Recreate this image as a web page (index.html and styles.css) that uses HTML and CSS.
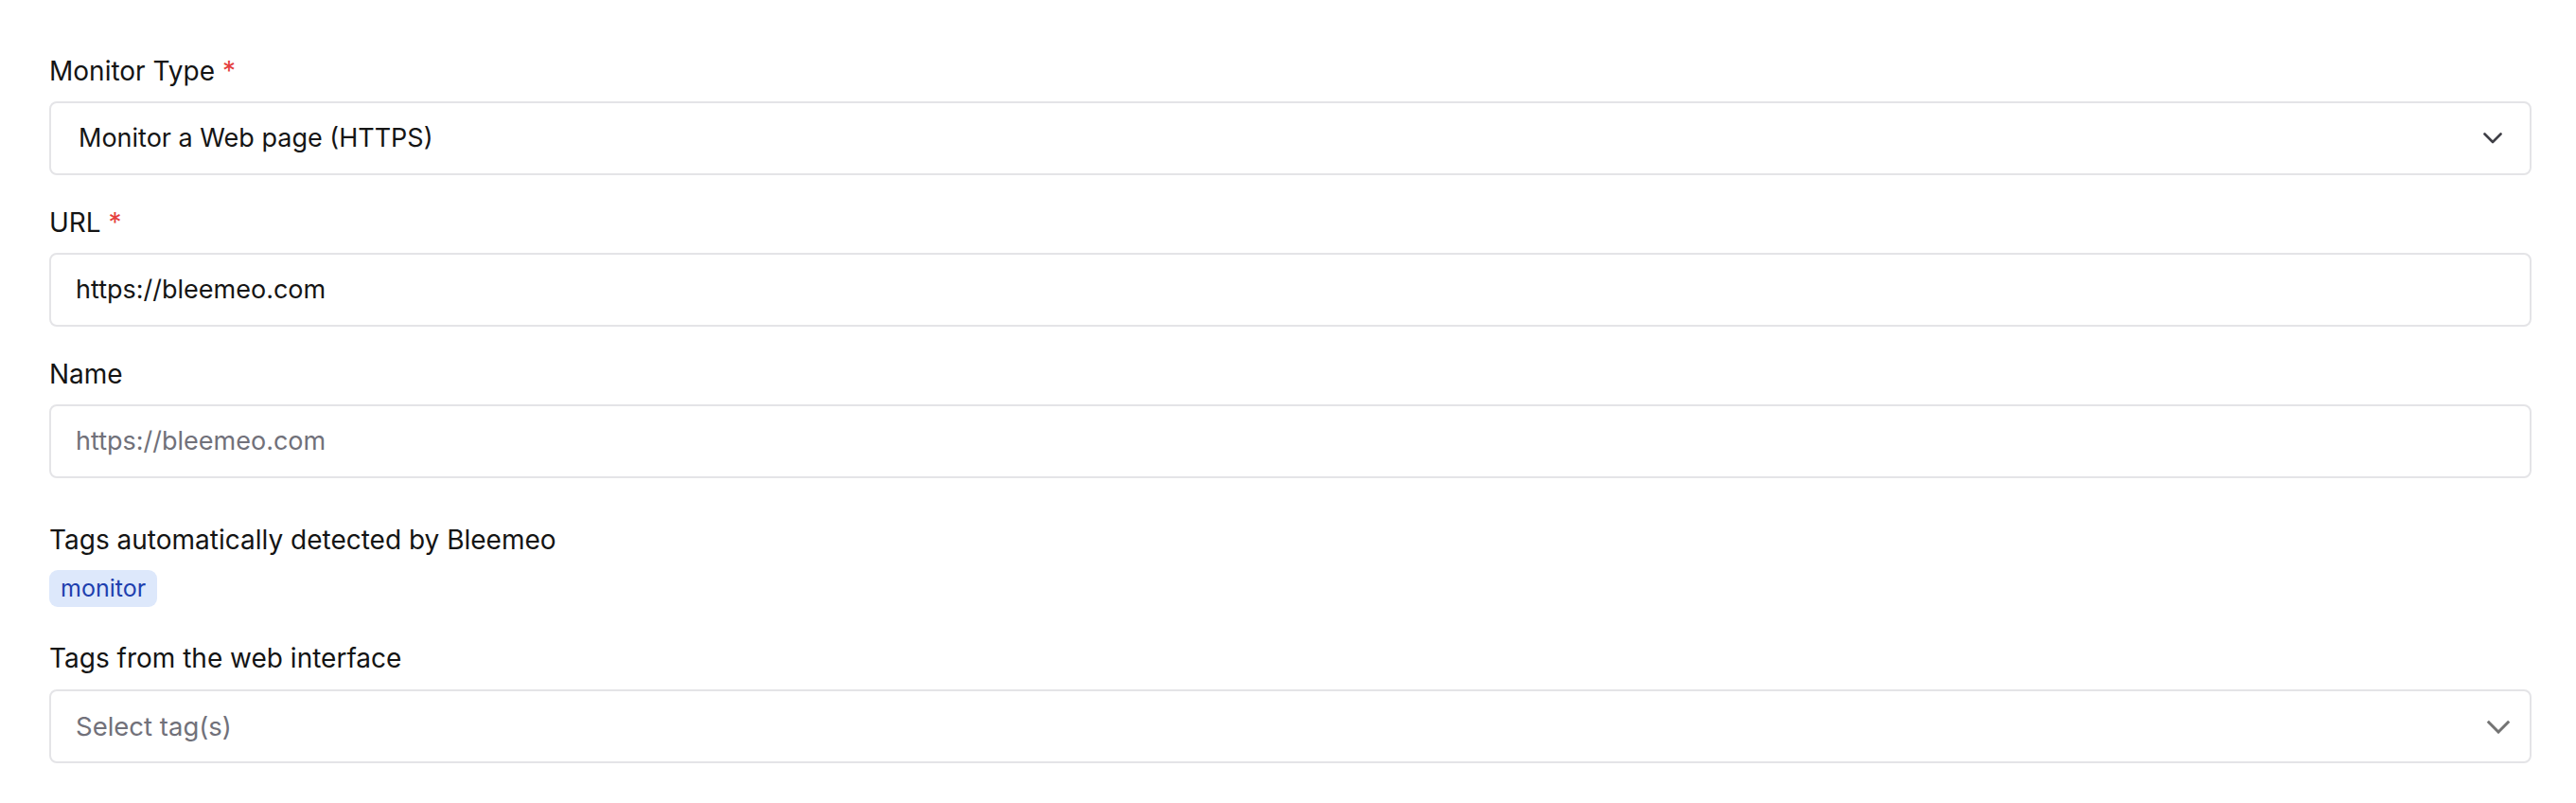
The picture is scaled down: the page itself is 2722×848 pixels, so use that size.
FILE: index.html
```html
<!DOCTYPE html>
<html lang="en">
<head>
<meta charset="utf-8">
<title>Monitor form</title>
<link rel="stylesheet" href="styles.css">
</head>
<body>
<form class="form">
  <div class="field">
    <label class="label">Monitor Type <span class="req">*</span></label>
    <div class="box select">
      <span class="value select-value">Monitor a Web page (HTTPS)</span>
      <svg class="chev chev-dark" width="20" height="12" viewBox="0 0 20 12"><path d="M1.5 1.5 L10 10 L18.5 1.5" fill="none" stroke="currentColor" stroke-width="2.6" stroke-linecap="round" stroke-linejoin="round"/></svg>
    </div>
  </div>
  <div class="field">
    <label class="label">URL <span class="req">*</span></label>
    <div class="box"><span class="value">https://bleemeo.com</span></div>
  </div>
  <div class="field">
    <label class="label">Name</label>
    <div class="box"><span class="value placeholder">https://bleemeo.com</span></div>
  </div>
  <div class="field field-tags">
    <label class="label">Tags automatically detected by Bleemeo</label>
    <div class="tags"><span class="tag">monitor</span></div>
  </div>
  <div class="field field-web">
    <label class="label">Tags from the web interface</label>
    <div class="box select">
      <span class="value placeholder tag-placeholder">Select tag(s)</span>
      <svg class="chev chev-gray" width="26" height="15" viewBox="0 0 26 15"><path d="M1.8 1.8 L13 13 L24.2 1.8" fill="none" stroke="currentColor" stroke-width="3" stroke-linecap="butt" stroke-linejoin="miter"/></svg>
    </div>
  </div>
</form>
</body>
</html>
```

FILE: styles.css
```css
html, body {
  margin: 0;
  padding: 0;
  background: #ffffff;
}
body {
  font-family: Inter, "Noto Sans", sans-serif;
  color: #161616;
}
.form {
  display: flex;
  flex-direction: column;
  margin: 54px 0 0 52px;
  width: 2623px;
}
.field {
  display: flex;
  flex-direction: column;
  gap: 11px;
  margin-bottom: 29px;
}
.field-tags {
  margin-top: 15px;
  margin-bottom: 33px;
}
.field-web {
  gap: 12px;
}
.label {
  font-size: 28px;
  line-height: 42px;
  height: 42px;
  color: #141414;
}
.req {
  color: #e53e3e;
}
.box {
  height: 78px;
  box-sizing: border-box;
  border: 2px solid #e4e4e7;
  border-radius: 8px;
  display: flex;
  align-items: center;
  padding: 0 26px;
}
.value {
  font-size: 27px;
  line-height: 40px;
  color: #151515;
}
.select-value {
  padding-left: 3px;
}
.placeholder {
  color: #71717a;
}
.tag-placeholder {
  font-size: 27.5px;
}
.select {
  justify-content: space-between;
  padding-right: 20px;
}
.chev-dark {
  color: #3f3f46;
  margin-right: 9px;
}
.chev-gray {
  color: #737373;
  margin-right: 0;
}
.tags {
  display: flex;
}
.tag {
  background: #dde8fb;
  color: #1e40af;
  font-size: 25px;
  line-height: 39px;
  height: 39px;
  padding: 0 12px;
  border-radius: 9px;
}
```
